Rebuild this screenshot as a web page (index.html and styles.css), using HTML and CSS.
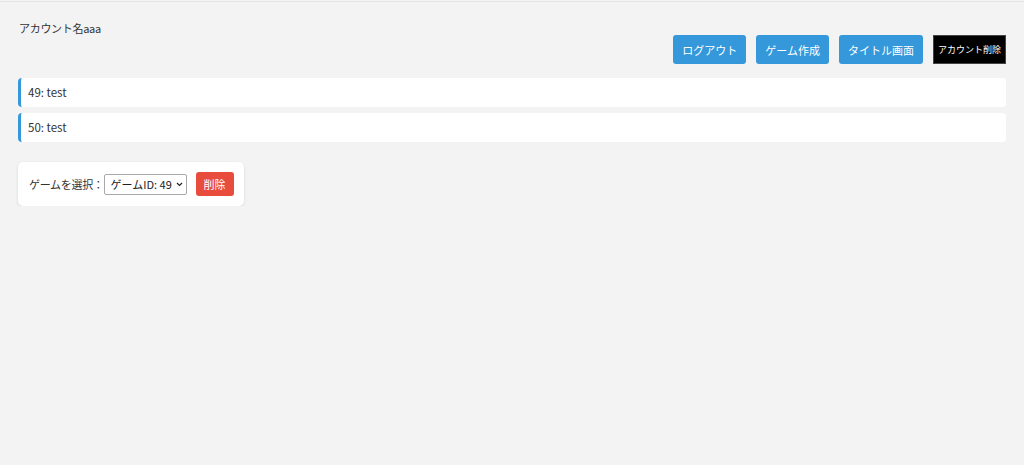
FILE: index.html
```html
<!DOCTYPE html>
<html lang="ja">
<head>
<meta charset="utf-8">
<title>アカウント</title>
<link rel="stylesheet" href="styles.css">
</head>
<body>
<div class="page">
  <div class="account-name">アカウント名aaa</div>
  <div class="actions">
    <button class="btn btn-blue">ログアウト</button>
    <button class="btn btn-blue">ゲーム作成</button>
    <button class="btn btn-blue">タイトル画面</button>
    <button class="btn btn-black">アカウント削除</button>
  </div>
  <ul class="game-list">
    <li class="game-item">49: test</li>
    <li class="game-item">50: test</li>
  </ul>
  <div class="panel">
    <label class="panel-label" for="game">ゲームを選択：</label>
    <span class="select-wrap">
      <select id="game" class="game-select">
        <option>ゲームID: 49</option>
        <option>ゲームID: 50</option>
      </select>
      <svg class="select-arrow" width="7" height="5" viewBox="0 0 7 5" aria-hidden="true"><path d="M1 1 L3.5 3.5 L6 1" fill="none" stroke="#222" stroke-width="1.2"/></svg>
    </span>
    <button class="btn btn-red">削除</button>
  </div>
</div>
</body>
</html>
```

FILE: styles.css
```css
html {
  background: #f3f3f3;
}
body {
  margin: 0;
  border-top: 1px solid #e4e4e4;
  margin-top: 1px;
  font-family: "Noto Sans CJK JP", "Noto Sans", sans-serif;
  color: #333;
  font-size: 12px;
}
.page {
  padding: 19px 18px 0 18px;
}
.account-name {
  font-size: 11px;
  line-height: 14px;
  padding-left: 1px;
  letter-spacing: -0.3px;
}
.actions {
  display: flex;
  justify-content: flex-end;
  gap: 10px;
}
.btn {
  font-family: inherit;
  border: none;
  cursor: pointer;
}
.btn-blue {
  background: #3498db;
  color: #fff;
  font-size: 11px;
  height: 29px;
  padding: 0 9px;
  border-radius: 3px;
}
.btn-black {
  background: #000;
  color: #fff;
  font-size: 9px;
  height: 29px;
  padding: 0 4px;
  border: 1px solid #444;
}
.game-list {
  list-style: none;
  margin: 14px 0 0 0;
  padding: 0;
}
.game-item {
  background: #fff;
  border-left: 3px solid #3498db;
  border-radius: 4px;
  padding: 7px 7px;
  font-size: 11.5px;
  line-height: 15px;
  margin-bottom: 6px;
}
.panel {
  display: inline-flex;
  align-items: center;
  background: #fff;
  border-radius: 5px;
  box-shadow: 0 1px 3px rgba(0, 0, 0, 0.12);
  padding: 10px;
  margin-top: 14px;
}
.panel-label {
  font-size: 11px;
  margin-left: 1px;
  letter-spacing: -0.3px;
}
.select-wrap {
  position: relative;
  display: inline-block;
  margin-right: 9px;
}
.game-select {
  -webkit-appearance: none;
  appearance: none;
  font-family: inherit;
  font-size: 11px;
  color: #222;
  background: #fff;
  height: 21px;
  width: 83px;
  padding: 0 0 0 6px;
  border: 1px solid #a9a9a9;
  border-radius: 2px;
  display: block;
}
.select-arrow {
  position: absolute;
  right: 4px;
  top: 8px;
  pointer-events: none;
}
.btn-red {
  background: #e74c3c;
  color: #fff;
  font-size: 11px;
  height: 24px;
  padding: 0 8px;
  border-radius: 3px;
}
```
